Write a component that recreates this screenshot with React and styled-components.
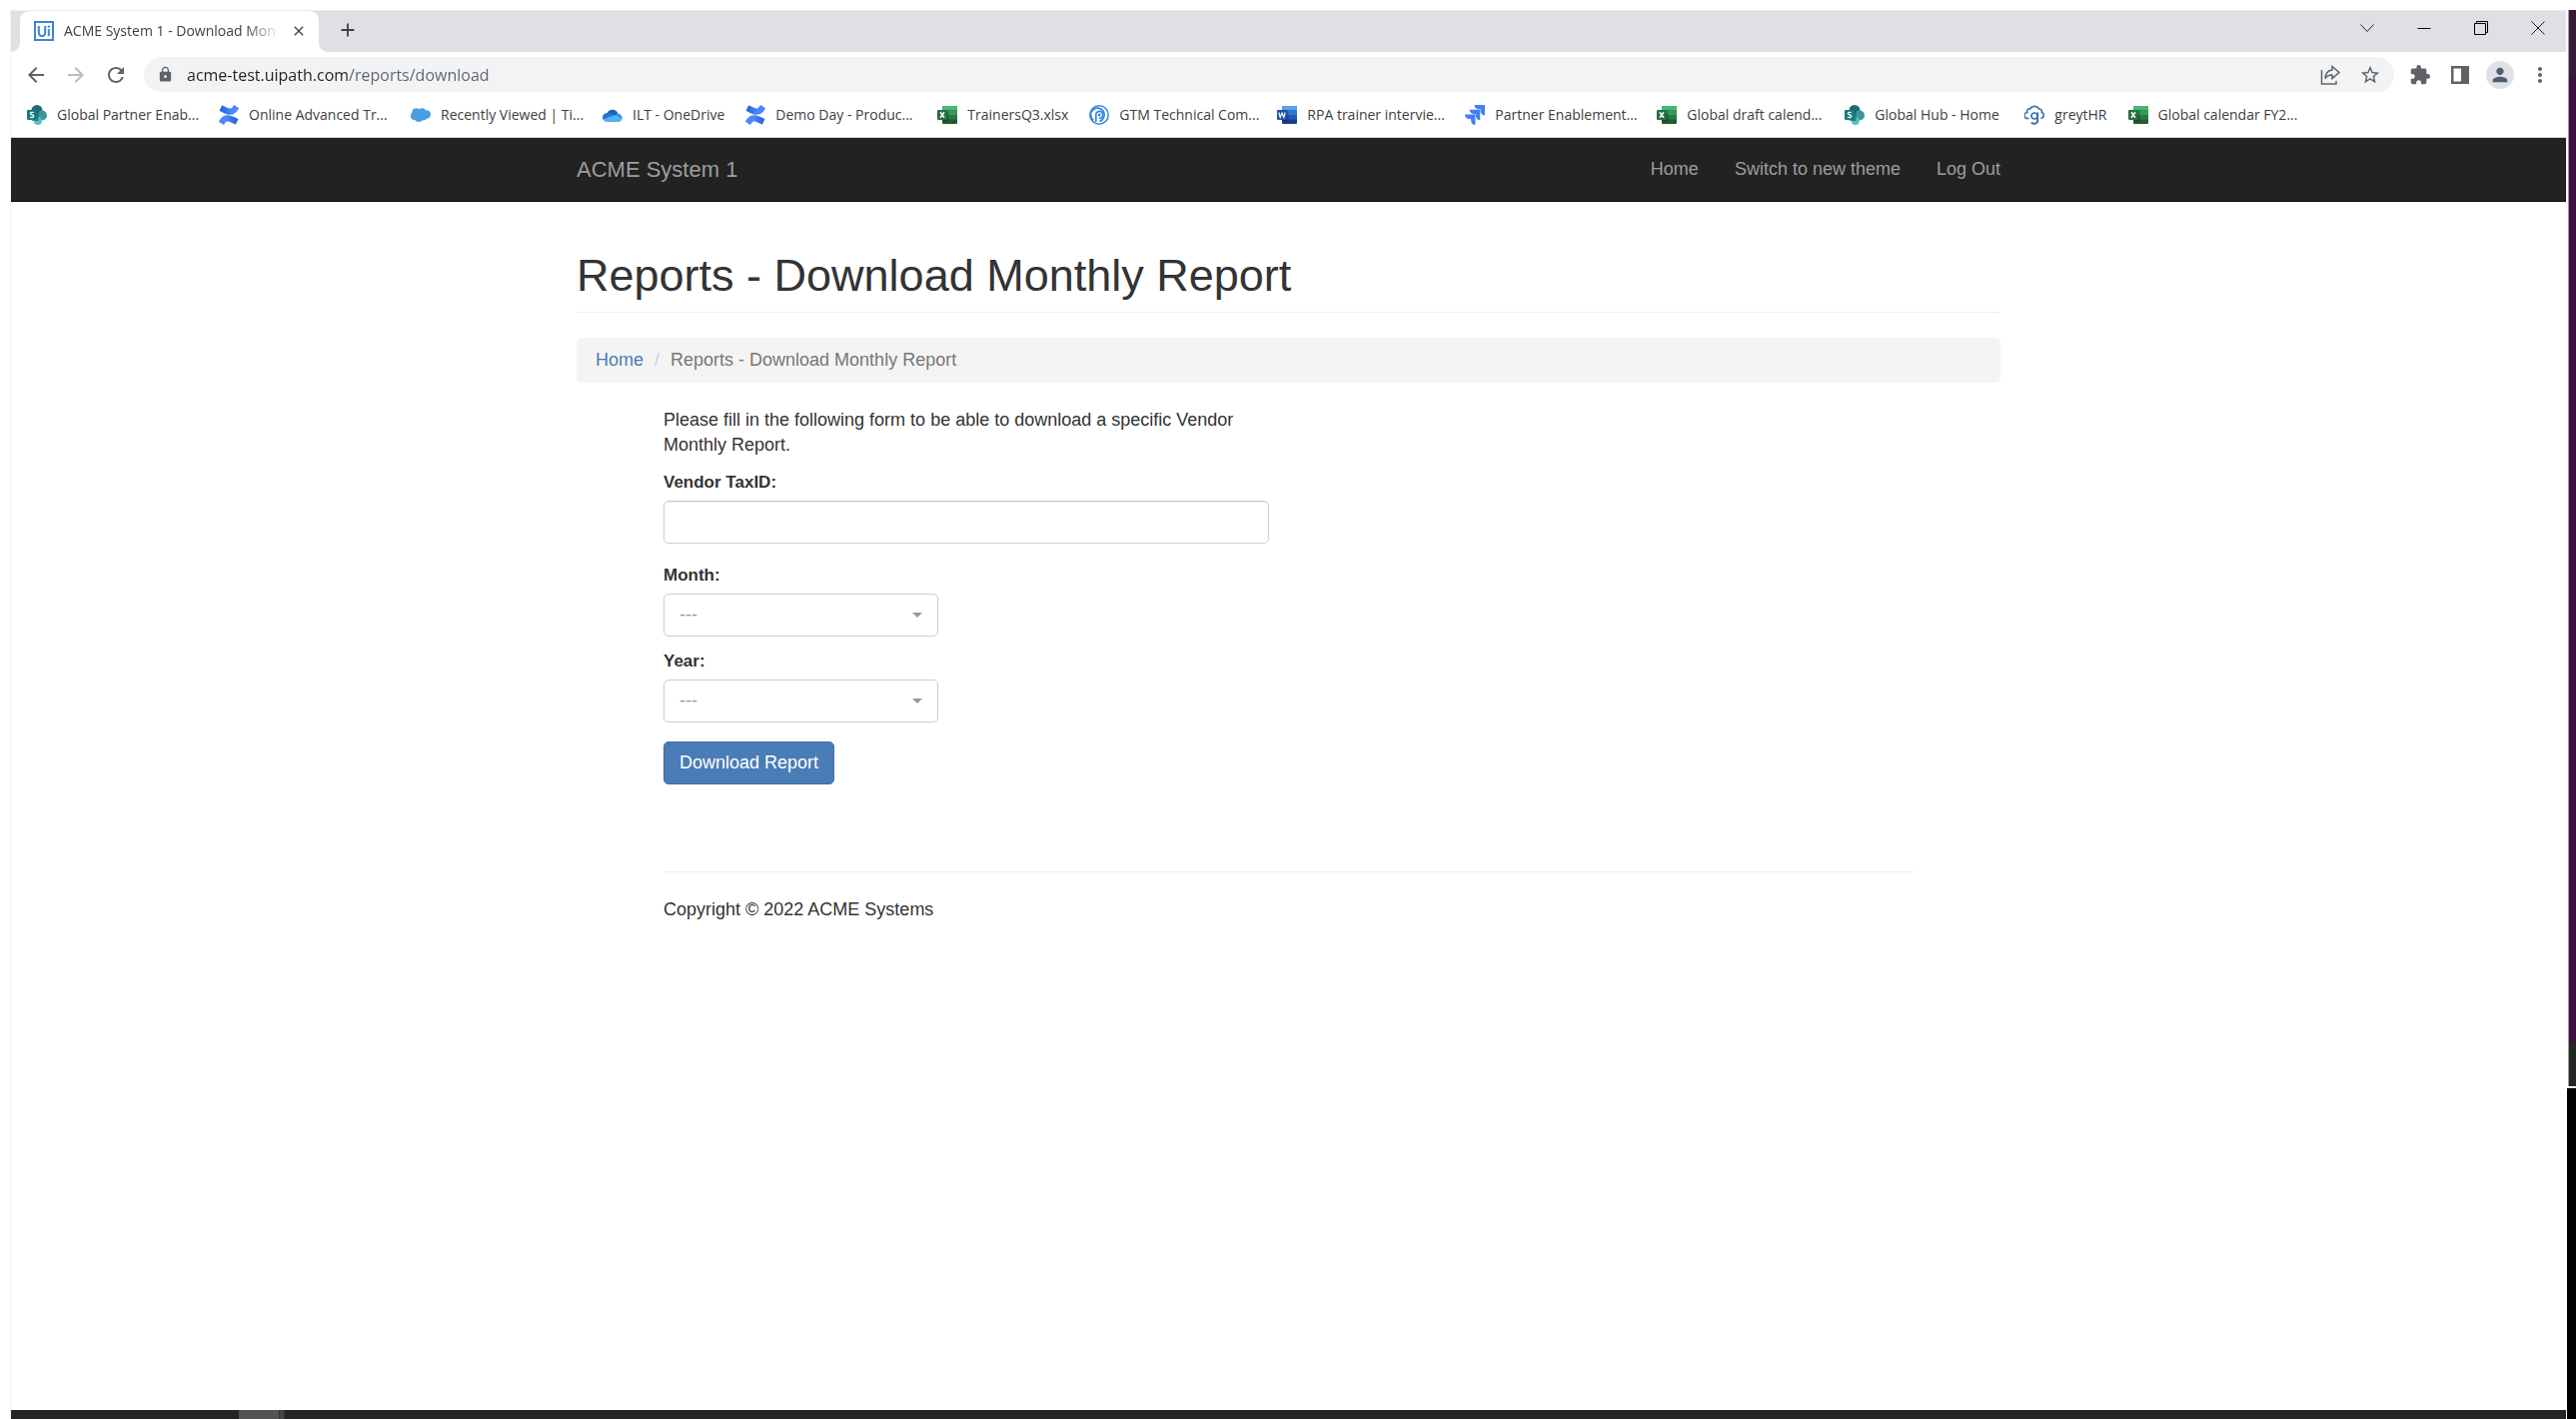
import React from "react";
import styled, { createGlobalStyle, css } from "styled-components";
import {
  MdArrowBack, MdArrowForward, MdRefresh, MdLock, MdStarBorder,
  MdExtension, MdMoreVert, MdClose, MdAdd, MdPerson,
} from "react-icons/md";
import { SiJira } from "react-icons/si";

const uiFont = `"Open Sans", "Noto Sans", sans-serif`;
const pageFont = `"Liberation Sans", Arial, sans-serif`;

const GlobalStyle = createGlobalStyle`
  *, *::before, *::after { box-sizing: border-box; }
  body { margin: 0; background: #fff; font-family: ${pageFont}; }
  button, input, select { font: inherit; }
`;

const Desktop = styled.div`
  min-height: 100vh;
  display: flex;
  padding: 10px 0 0 10px;
`;

const Window = styled.div`
  flex: 1;
  min-width: 0;
  display: flex;
  flex-direction: column;
  border-left: 1px solid #f4f4f5;
`;

const EdgeStrip = styled.div`
  flex: none;
  width: 10px;
  display: flex;
  flex-direction: column;
  align-items: flex-end;
`;

const EdgePart = styled.div`
  width: ${(p) => (p.$wide ? 9 : 8)}px;
  height: ${(p) => (p.$height ? `${p.$height}px` : "auto")};
  flex: ${(p) => (p.$grow ? `${p.$grow} 1 0` : "none")};
  background: ${(p) => p.$color};
  border-left: ${(p) => (p.$wide ? "none" : "1px solid #a09aa3")};
  margin-bottom: ${(p) => (p.$gap ? 2 : 0)}px;
`;

/* browser frame */

const TabStrip = styled.div`
  height: 42px;
  display: flex;
  background: #dfe0e5;
  border-top: 1px solid #ebecef;
  font-family: ${uiFont};
`;

const TabCorner = styled.span`
  width: 9px;
  background: #fff;
  &::after {
    content: "";
    display: block;
    height: 100%;
    background: #dfe0e5;
    border-radius: ${(p) => (p.$side === "left" ? "0 0 9px 0" : "0 0 0 9px")};
  }
`;

const Tab = styled.div`
  width: 299px;
  display: flex;
  align-items: center;
  padding: 0 12px 2px 14px;
  background: #fff;
  border-radius: 9px 9px 0 0;
`;

const Favicon = styled.svg`
  width: 20px;
  height: 20px;
  flex: none;
  margin-right: 10px;
`;

const TabTitle = styled.span`
  margin-right: auto;
  white-space: nowrap;
  font-size: 14px;
  line-height: 20px;
  color: #3c4043;
  mask-image: linear-gradient(to right, #000 86%, rgba(0, 0, 0, 0.15));
`;

const IconButton = styled.button`
  width: ${(p) => p.$width || 40}px;
  height: ${(p) => p.$height || 34}px;
  flex: none;
  padding: 0;
  border: 0;
  background: none;
  display: flex;
  align-items: center;
  justify-content: center;
  color: ${(p) => p.$color || "#5f6368"};
  svg { width: ${(p) => p.$icon || 22}px; height: ${(p) => p.$icon || 22}px; }
`;

const WindowControls = styled.div`
  display: flex;
  margin-left: auto;
`;

const Toolbar = styled.div`
  height: 45px;
  display: flex;
  align-items: center;
  padding: 0 6px 0 5px;
  font-family: ${uiFont};
`;

const AddressBar = styled.label`
  flex: 1;
  min-width: 0;
  height: 35px;
  margin: 0 6px 0 8px;
  padding: 0 4px 0 13px;
  display: flex;
  align-items: center;
  background: #f1f3f4;
  border-radius: 18px;
  color: #5f6368;
`;

const AddressInput = styled.input`
  flex: 1;
  min-width: 0;
  padding: 0;
  margin-left: 13px;
  border: 0;
  outline: 0;
  font-size: 16px;
  color: transparent;
  background: linear-gradient(to right, #202124 162px, #5f6368 162px);
  background-clip: text;
`;

const Avatar = styled.span`
  width: 28px;
  height: 28px;
  border-radius: 50%;
  background: #dee1e6;
  display: flex;
  align-items: center;
  justify-content: center;
`;

const Bookmarks = styled.nav`
  height: 41px;
  display: flex;
  align-items: center;
  gap: 21px;
  padding: 0 16px 5px;
  border-bottom: 1px solid #d9dbde;
  font-family: ${uiFont};
`;

const Bookmark = styled.a`
  display: flex;
  align-items: center;
  gap: 10px;
  flex: none;
  color: #3c4043;
  font-size: 14px;
  line-height: 20px;
  text-decoration: none;
  white-space: nowrap;
  > svg { width: 20px; height: 20px; flex: none; }
`;

const BookmarkLabel = styled.span`
  ${(p) => p.$width && css`width: ${p.$width}px;`}
`;

/* web page */

const Page = styled.div`
  flex: 1;
  background: #fff;
  color: #333;
  font-size: 18px;
  line-height: 25px;
`;

const Container = styled.div`
  max-width: 1425px;
  margin: 0 auto;
`;

const Navbar = styled.header`
  background: #222;
  border-bottom: 1px solid #080808;
`;

const NavRow = styled(Container)`
  height: 63px;
  display: flex;
  align-items: center;
  justify-content: space-between;
`;

const Brand = styled.a`
  color: #9d9d9d;
  font-size: 22px;
  text-decoration: none;
`;

const NavLinks = styled.nav`
  display: flex;
  gap: 36px;
`;

const NavLink = styled.a`
  color: #9d9d9d;
  text-decoration: none;
`;

const PageTitle = styled.h1`
  margin: 0;
  padding: 49px 0 11px;
  border-bottom: 1px solid #eee;
  font-size: 45px;
  font-weight: 400;
  line-height: 50px;
`;

const Breadcrumb = styled.ol`
  margin: 25px 0;
  padding: 10px 19px;
  list-style: none;
  display: flex;
  background: #f4f4f4;
  border-radius: 5px;
  color: #777;
`;

const Crumb = styled.li`
  & + &::before {
    content: "/";
    padding: 0 11px;
    color: #ccc;
  }
  a { color: #4a7cb5; text-decoration: none; }
`;

const Content = styled.main`
  padding: 0 87px;
`;

const ReportForm = styled.form`
  max-width: 606px;
`;

const Intro = styled.p`
  margin: 0 0 12px;
`;

const Field = styled.div`
  margin-bottom: ${(p) => p.$space}px;
`;

const FieldLabel = styled.label`
  display: block;
  margin-bottom: 6px;
  font-size: 17px;
  font-weight: 700;
`;

const TextInput = styled.input`
  display: block;
  width: 100%;
  height: 43px;
  padding: 7px 15px;
  border: 1px solid #ccc;
  border-radius: 5px;
  box-shadow: inset 0 1px 1px rgba(0, 0, 0, 0.075);
`;

const SelectBox = styled.div`
  position: relative;
  width: 275px;
  &::after {
    content: "";
    position: absolute;
    right: 16px;
    top: 19px;
    border: 5px solid transparent;
    border-top-color: #999;
    border-bottom: 0;
    pointer-events: none;
  }
`;

const Select = styled.select`
  display: block;
  width: 100%;
  height: 43px;
  padding: 0 15px;
  appearance: none;
  border: 1px solid #ccc;
  border-radius: 5px;
  background: #fff;
  color: #999;
`;

const SubmitButton = styled.button`
  height: 43px;
  padding: 0 15px;
  border: 1px solid #426fa5;
  border-radius: 5px;
  background: #4a7cb5;
  color: #fff;
`;

const Footer = styled.footer`
  margin-top: 87px;
  padding-top: 25px;
  border-top: 1px solid #eee;
`;

const Taskbar = styled.div`
  height: 9px;
  display: flex;
  padding-left: 228px;
  background: #262524;
`;

const TaskSegment = styled.span`
  width: ${(p) => p.$width}px;
  background: ${(p) => p.$color};
  border-right: 1px solid #353535;
`;

/* drawings */

const UiPathFavicon = () => (
  <Favicon viewBox="0 0 20 20" fill="none" stroke="#3d85d0">
    <rect x="1" y="1" width="18" height="18" strokeWidth="2" />
    <path d="M4.800 5v6.200c0 2.400 1.100 3.800 3.200 3.800s3.200-1.400 3.200-3.800V5M14.800 8v7" strokeWidth="2" />
    <circle cx="14.800" cy="5.600" r="1.200" fill="#3d85d0" stroke="none" />
  </Favicon>
);

const SharePointIcon = () => (
  <svg viewBox="0 0 20 20">
    <circle cx="10" cy="5.500" r="5.500" fill="#24696d" />
    <circle cx="15" cy="10.500" r="5" fill="#3d9599" />
    <circle cx="10.800" cy="16" r="4" fill="#52c0c8" />
    <rect x="5" y="5.500" width="6.500" height="10.500" fill="#174f52" opacity=".6" />
    <rect y="5" width="10" height="10" rx="1" fill="#167c80" />
    <path d="M6.700 7.800C5.900 7.100 3.400 7 3.400 8.600c0 1.600 3.300 1.100 3.300 2.700 0 1.600-2.700 1.500-3.600.8" fill="none" stroke="#fff" strokeWidth="1.300" />
  </svg>
);

const ConfluenceIcon = () => {
  const id = React.useId();
  return (
    <svg viewBox="0 0 24 24">
      <defs>
        <linearGradient id={`${id}a`} x1="1" y1="0" x2="0" y2="0">
          <stop offset="0" stopColor="#2360d8" />
          <stop offset=".6" stopColor="#4a86ff" />
        </linearGradient>
        <linearGradient id={`${id}b`}>
          <stop offset="0" stopColor="#2360d8" />
          <stop offset=".6" stopColor="#4a86ff" />
        </linearGradient>
      </defs>
      <path fill={`url(#${id}a)`} d="M.87 18.257c-.248.382-.53.875-.763 1.245a.764.764 0 0 0 .255 1.040l4.965 3.054a.764.764 0 0 0 1.058-.26c.199-.332.454-.763.733-1.221 1.967-3.247 3.945-2.853 7.508-1.146l4.957 2.337a.764.764 0 0 0 1.028-.382l2.364-5.346a.764.764 0 0 0-.382-1 599.851 599.851 0 0 1-4.965-2.361C10.911 10.970 5.224 11.185.87 18.257z" />
      <path fill={`url(#${id}b)`} d="M23.131 5.743c.249-.405.531-.875.764-1.250a.764.764 0 0 0-.256-1.034L18.675.404a.764.764 0 0 0-1.058.26c-.195.335-.451.763-.734 1.225-1.966 3.246-3.945 2.850-7.508 1.146L4.437.694a.764.764 0 0 0-1.027.382L1.046 6.422a.764.764 0 0 0 .382 1c1.039.49 3.105 1.467 4.965 2.361 6.698 3.246 12.392 3.029 16.738-4.040z" />
    </svg>
  );
};

const CloudIcon = () => (
  <svg viewBox="0 0 20 20" fill="#4a9fe0">
    <circle cx="5.500" cy="7.500" r="4.300" />
    <circle cx="4" cy="11" r="4" />
    <circle cx="11.500" cy="7" r="3.800" />
    <circle cx="15.800" cy="9.500" r="4.200" />
    <circle cx="8" cy="13" r="4" />
    <circle cx="12.500" cy="12" r="3.600" />
  </svg>
);

const OneDriveIcon = () => (
  <svg viewBox="0 0 20 20">
    <path d="M4.500 8.500a5.800 5.800 0 0 1 10.800 0L10 13z" fill="#1c5fc0" />
    <path d="M4.500 8a4.500 4.500 0 0 0-3.700 6.900L12 10.500 8 8.300A6 6 0 0 0 4.500 8z" fill="#2d72d2" />
    <path d="M12 10.500l3-2a4.500 4.500 0 0 1 4.200 6.300z" fill="#3a97e8" />
    <path d="M.8 14.800 11.300 10.200 19.300 14.800A3.600 3.600 0 0 1 16 17H4.500a4.300 4.300 0 0 1-3.700-2.200z" fill="#4fb0f2" />
  </svg>
);

const OfficeIcon = ({ letter, shades }) => (
  <svg viewBox="0 0 20 20">
    <rect x="5" y="1" width="15" height="18" rx="1" fill={shades[3]} />
    <path d="M5 1h14q1 0 1 1v3.500H5z" fill={shades[0]} />
    <path d="M5 5.500h15V10H5z" fill={shades[1]} />
    <path d="M5 10h15v4.500H5z" fill={shades[2]} />
    <rect x="5" y="5.500" width="6.500" height="10.500" fill="#000" opacity=".25" />
    <rect y="5" width="10" height="10" rx="1" fill={shades[4]} />
    {letter === "X" ? (
      <path d="M3 7.300 7 12.700M7 7.300 3 12.700" stroke="#fff" strokeWidth="1.500" />
    ) : (
      <path d="M1.800 7.500 3.200 12.500 5 8l1.800 4.500L8.200 7.500" fill="none" stroke="#fff" strokeWidth="1.200" />
    )}
  </svg>
);

const green = ["#45b877", "#36995a", "#2a7a43", "#235a35", "#237040"];
const blue = ["#55a3ea", "#3576cf", "#2059b8", "#193f8a", "#1b4fb0"];

const SwirlIcon = () => (
  <svg viewBox="0 0 20 20" fill="none" stroke="#3585e0">
    <circle cx="10" cy="10" r="9.200" strokeWidth="1.500" />
    <path d="M4.500 15.500A6.800 6.800 0 1 1 10.500 16.400" strokeWidth="1.700" />
    <path d="M6.800 17V10A3.500 3.500 0 1 1 10.200 13.300" strokeWidth="1.700" />
    <circle cx="10.200" cy="10" r="1.400" fill="#3585e0" stroke="none" />
  </svg>
);

const GreytIcon = () => (
  <svg viewBox="0 0 20 20" fill="none" stroke="#3d76ad" strokeWidth="1.700">
    <path d="M4.500 13.500H3.500A2.900 2.900 0 0 1 2.800 7.500 2.500 2.500 0 0 1 5.700 4 5 5 0 0 1 14.500 4 2.700 2.700 0 0 1 17.300 7.500 2.900 2.900 0 0 1 16.500 13.200" />
    <circle cx="10" cy="11" r="3" />
    <path d="M13.200 7.500V15.500a3 3 0 0 1-3.200 3.200q-2 0-3-1.200" strokeWidth="2" />
  </svg>
);

const ShareIcon = () => (
  <svg viewBox="0 0 22 22" fill="none" stroke="currentColor" strokeWidth="1.500">
    <path d="M2.500 6v14h14.500v-3" />
    <path d="M13 2.500 20 8.500 13 14.500V11C9.500 11 7.500 12 6 14.500 6.300 10 8.500 6.500 13 6z" />
  </svg>
);

const PanelIcon = () => (
  <svg viewBox="0 0 22 22">
    <path d="M2 2h18v18H2zM4.500 4.500v13H12v-13z" fill="currentColor" fillRule="evenodd" />
  </svg>
);

const ChevronIcon = () => (
  <svg viewBox="0 0 14 14" fill="none" stroke="currentColor"><path d="M.5 3.500 7 10.500 13.500 3.500" /></svg>
);
const MinimizeIcon = () => (
  <svg viewBox="0 0 14 14" stroke="currentColor"><path d="M.5 7.500h13" /></svg>
);
const RestoreIcon = () => (
  <svg viewBox="0 0 14 14" fill="none" stroke="currentColor">
    <path d="M.5 2.500h11v11H.5zM2.500 2.500v-2h11v11h-2" />
  </svg>
);
const CloseIcon = () => (
  <svg viewBox="0 0 14 14" stroke="currentColor"><path d="M.5.5l13 13M13.500.5l-13 13" /></svg>
);

const ExcelIcon = () => <OfficeIcon letter="X" shades={green} />;
const WordIcon = () => <OfficeIcon letter="W" shades={blue} />;
const JiraIcon = () => <SiJira color="#4080fa" />;

const bookmarks = [
  { label: "Global Partner Enab...", icon: SharePointIcon, width: 141 },
  { label: "Online Advanced Tr...", icon: ConfluenceIcon, width: 141 },
  { label: "Recently Viewed | Ti...", icon: CloudIcon, width: 141 },
  { label: "ILT - OneDrive", icon: OneDriveIcon },
  { label: "Demo Day - Produc...", icon: ConfluenceIcon, width: 141 },
  { label: "TrainersQ3.xlsx", icon: ExcelIcon },
  { label: "GTM Technical Com...", icon: SwirlIcon, width: 137 },
  { label: "RPA trainer intervie...", icon: WordIcon, width: 137 },
  { label: "Partner Enablement...", icon: JiraIcon, width: 141 },
  { label: "Global draft calend...", icon: ExcelIcon, width: 137 },
  { label: "Global Hub - Home", icon: SharePointIcon, width: 129 },
  { label: "greytHR", icon: GreytIcon },
  { label: "Global calendar FY2...", icon: ExcelIcon, width: 141 },
];

export default function App() {
  return (
    <>
      <GlobalStyle />
      <Desktop>
        <Window>
          <TabStrip>
            <TabCorner $side="left" />
            <Tab>
              <UiPathFavicon />
              <TabTitle>ACME System 1 - Download Mon</TabTitle>
              <IconButton aria-label="Close tab" $width={16} $icon={18} $color="#3c4043"><MdClose /></IconButton>
            </Tab>
            <TabCorner $side="right" />
            <IconButton aria-label="New tab" $height={38} $icon={22} $color="#3c4043"><MdAdd /></IconButton>
            <WindowControls>
              <IconButton aria-label="Search tabs" $width={57} $icon={14} $color="#202124"><ChevronIcon /></IconButton>
              <IconButton aria-label="Minimize" $width={57} $icon={14} $color="#000"><MinimizeIcon /></IconButton>
              <IconButton aria-label="Restore" $width={57} $icon={14} $color="#000"><RestoreIcon /></IconButton>
              <IconButton aria-label="Close" $width={57} $icon={14} $color="#202124"><CloseIcon /></IconButton>
            </WindowControls>
          </TabStrip>
          <Toolbar>
            <IconButton aria-label="Back" $icon={24}><MdArrowBack /></IconButton>
            <IconButton aria-label="Forward" $icon={24} $color="#babcbe"><MdArrowForward /></IconButton>
            <IconButton aria-label="Reload" $icon={24}><MdRefresh /></IconButton>
            <AddressBar>
              <MdLock size={17} />
              <AddressInput aria-label="Address" defaultValue="acme-test.uipath.com/reports/download" />
              <IconButton aria-label="Share"><ShareIcon /></IconButton>
              <IconButton aria-label="Bookmark this page"><MdStarBorder /></IconButton>
            </AddressBar>
            <IconButton aria-label="Extensions"><MdExtension /></IconButton>
            <IconButton aria-label="Side panel"><PanelIcon /></IconButton>
            <IconButton aria-label="Profile" $color="#4f5b70"><Avatar><MdPerson /></Avatar></IconButton>
            <IconButton aria-label="Menu" $icon={24}><MdMoreVert /></IconButton>
          </Toolbar>
          <Bookmarks aria-label="Bookmarks">
            {bookmarks.map(({ label, icon: Icon, width }) => (
              <Bookmark href="#" key={label}>
                <Icon />
                <BookmarkLabel $width={width}>{label}</BookmarkLabel>
              </Bookmark>
            ))}
          </Bookmarks>
          <Page>
            <Navbar>
              <NavRow>
                <Brand href="#">ACME System 1</Brand>
                <NavLinks>
                  <NavLink href="#">Home</NavLink>
                  <NavLink href="#">Switch to new theme</NavLink>
                  <NavLink href="#">Log Out</NavLink>
                </NavLinks>
              </NavRow>
            </Navbar>
            <Container>
              <PageTitle>Reports - Download Monthly Report</PageTitle>
              <Breadcrumb>
                <Crumb><a href="#">Home</a></Crumb>
                <Crumb>Reports - Download Monthly Report</Crumb>
              </Breadcrumb>
              <Content>
                <ReportForm>
                  <Intro>
                    Please fill in the following form to be able to download a specific Vendor Monthly Report.
                  </Intro>
                  <Field $space={19}>
                    <FieldLabel htmlFor="taxId">Vendor TaxID:</FieldLabel>
                    <TextInput id="taxId" type="text" />
                  </Field>
                  <Field $space={12}>
                    <FieldLabel htmlFor="month">Month:</FieldLabel>
                    <SelectBox>
                      <Select id="month"><option>---</option></Select>
                    </SelectBox>
                  </Field>
                  <Field $space={19}>
                    <FieldLabel htmlFor="year">Year:</FieldLabel>
                    <SelectBox>
                      <Select id="year"><option>---</option></Select>
                    </SelectBox>
                  </Field>
                  <SubmitButton type="button">Download Report</SubmitButton>
                </ReportForm>
                <Footer>Copyright © 2022 ACME Systems</Footer>
              </Content>
            </Container>
          </Page>
          <Taskbar>
            <TaskSegment $width={41} $color="#535353" />
            <TaskSegment $width={5} $color="#444" />
          </Taskbar>
        </Window>
        <EdgeStrip>
          <EdgePart $height={66} $color="#361c38" />
          <EdgePart $grow={967} $color="#3f0e40" />
          <EdgePart $height={44} $color="#252725" $gap />
          <EdgePart $grow={331} $color="#000" $wide />
        </EdgeStrip>
      </Desktop>
    </>
  );
}
